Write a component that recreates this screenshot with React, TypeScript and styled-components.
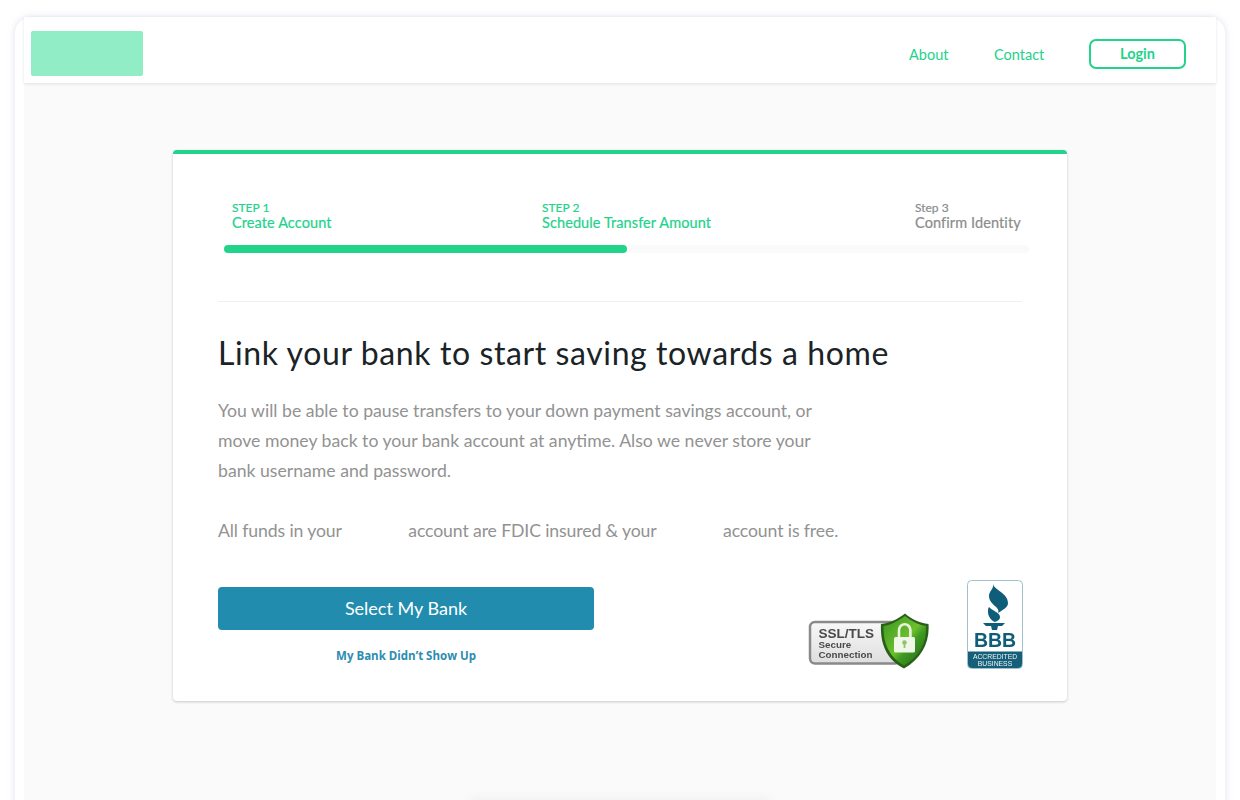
import React from "react";
import styled, { createGlobalStyle } from "styled-components";

const Global = createGlobalStyle`
  html, body { margin: 0; padding: 0; background: #fff; height: 800px; overflow: hidden; }
  * { box-sizing: border-box; }
`;
const heading = `"Lato", "Liberation Sans", sans-serif`;
const bodyFont = `"Lato", "Noto Sans", "Liberation Sans", sans-serif`;
const green = "#22d38a";
const teal = "#218cae";

const Stage = styled.div`
  width: 1240px;
  height: 800px;
  padding: 17px 15px 0;
  overflow: hidden;
`;
const Frame = styled.div`
  width: 1210px;
  height: 830px;
  padding: 0 9px;
  background: #fff;
  border-radius: 16px;
  box-shadow: 0 0 7px rgba(200, 205, 226, 0.6);
`;
const Header = styled.header`
  height: 66px;
  padding: 14px 30px 0 7px;
  display: flex;
  align-items: flex-start;
  background: #fff;
  position: relative;
  box-shadow: 0 1px 3px rgba(0, 0, 0, 0.1);
`;
const Logo = styled.div`
  width: 112px;
  height: 45px;
  background: #90edc5;
  border-radius: 2px;
`;
const Nav = styled.nav`
  margin-left: auto;
  padding-top: 8px;
  display: flex;
  align-items: center;
  font-family: ${heading};
  font-size: 14.5px;
  color: ${green};
`;
const NavLink = styled.a`
  margin-right: 45px;
  width: ${(p: { $w: number }) => p.$w}px;
  white-space: nowrap;
`;
const Login = styled.button`
  width: 97px;
  height: 30px;
  padding: 0 0 2px;
  background: #fff;
  border: 2px solid ${green};
  border-radius: 7px;
  color: ${green};
  font-family: ${heading};
  font-weight: 700;
  font-size: 14.5px;
`;
const Main = styled.main`
  height: 764px;
  padding-top: 67px;
  background: #fafafa;
  display: flex;
  flex-direction: column;
  align-items: center;
`;
const Card = styled.section`
  width: 894px;
  height: 551px;
  flex: none;
  padding: 47px 45px 0;
  background: #fff;
  border-top: 4px solid ${green};
  border-radius: 4px;
  box-shadow: 0 1px 3px rgba(0, 0, 0, 0.2);
`;
const Steps = styled.div`
  display: grid;
  grid-template-columns: 310px 373px auto;
  padding-left: 14px;
  height: 39px;
`;
const Step = styled.div<{ $on?: boolean }>`
  font-family: ${heading};
  color: ${(p) => (p.$on ? green : "#8c8c8c")};
  line-height: 14px;
  font-size: 12px;
  white-space: nowrap;
  -webkit-text-stroke: 0.2px currentColor;
`;
const StepName = styled.div`
  font-size: 14.5px;
  letter-spacing: 0.1px;
  line-height: 16px;
`;
const Track = styled.div`
  margin: 5px -7px 0 6px;
  height: 8px;
  border-radius: 4px;
  background: #fafafa;
`;
const Fill = styled.div`
  width: 50%;
  height: 100%;
  border-radius: 4px;
  background: ${green};
`;
const Divider = styled.hr`
  margin: 48px 0 0;
  border: 0;
  height: 1px;
  background: #f0f0f0;
`;
const Title = styled.h1`
  margin: 29px 0 0;
  font-family: ${heading};
  font-weight: 400;
  font-size: 32px;
  letter-spacing: 0.6px;
  line-height: 44px;
  color: #1a2326;
  white-space: nowrap;
`;
const Para = styled.p`
  margin: 21px 0 0;
  font-family: ${bodyFont};
  font-size: 17.65px;
  line-height: 30px;
  color: #929292;
  white-space: nowrap;
`;
const Para2 = styled(Para)`
  margin-top: 30px;
  letter-spacing: -0.12px;
`;
const Gap = styled.span`
  display: inline-block;
  width: 58px;
`;
const Bottom = styled.div`
  margin-top: 15px;
  display: flex;
  align-items: flex-start;
`;
const Cta = styled.div`
  width: 376px;
  padding-top: 26px;
  display: flex;
  flex-direction: column;
  align-items: center;
`;
const Primary = styled.button`
  width: 100%;
  height: 43px;
  padding: 0 0 2px;
  border: 0;
  border-radius: 4px;
  background: ${teal};
  color: #fff;
  font-family: ${heading};
  font-size: 18px;
`;
const Missing = styled.a`
  margin-top: 18px;
  font-family: "Open Sans", sans-serif;
  font-weight: 700;
  font-size: 11.5px;
  line-height: 16px;
  color: #2c8db0;
`;
const Badges = styled.div`
  margin-left: auto;
  margin-right: -1px;
  display: flex;
  align-items: flex-start;
  gap: 37px;
  padding-top: 19px;
`;
const SslBadge = styled.svg`
  margin-top: 33px;
  filter: blur(0.5px);
`;
const BbbBadge = styled.svg`
  filter: blur(0.35px);
`;
const FaintShade = styled.div`
  margin-top: 97px;
  width: 300px;
  height: 10px;
  flex: none;
  background: #f0f0f0;
  filter: blur(4px);
`;

const Ssl = () => (
  <SslBadge width="122" height="56" viewBox="0 0 122 56">
    <defs>
      <linearGradient id="plate" x1="0" y1="0" x2="0" y2="1">
        <stop offset="0" stopColor="#f8f8f8" />
        <stop offset="1" stopColor="#dedede" />
      </linearGradient>
      <linearGradient id="shield" x1="0" y1="0" x2="1" y2="1">
        <stop offset="0" stopColor="#3c9620" />
        <stop offset="0.5" stopColor="#6cc02c" />
        <stop offset="0.62" stopColor="#3f9a22" />
        <stop offset="1" stopColor="#1f6414" />
      </linearGradient>
    </defs>
    <rect x="2" y="9" width="90" height="41.5" rx="5" fill="url(#plate)" stroke="#8a8a8a" strokeWidth="2.5" />
    <text fontFamily="Liberation Sans, sans-serif" fontWeight="700" fill="#4a4a4a">
      <tspan x="10.5" y="24.5" fontSize="13.5">SSL/TLS</tspan>
      <tspan x="10.5" y="34.5" fontSize="9.8">Secure</tspan>
      <tspan x="10.5" y="44.8" fontSize="9.8">Connection</tspan>
    </text>
    <path d="M97 0.5 C 90 6 82 10 73 11 C 72 30 78 46 96 55.5 C 113 46 122 30 120.5 11 C 112 10 103 6 97 0.5 Z" fill="#2a5f1a" />
    <path d="M97 3 C 90 8 83 12 75.5 13 C 75 30 81 44 96 52.5 C 111 44 119 30 118 13 C 111 12 103 8 97 3 Z" fill="url(#shield)" />
    <path d="M91 25 v-8 a5.7 5.7 0 0 1 11.4 0 v8" fill="none" stroke="#eaf5df" strokeWidth="2.6" />
    <rect x="86" y="24" width="21" height="15.5" rx="1.5" fill="#f0f7e8" />
    <circle cx="96.5" cy="29.5" r="2.3" fill="#8fc46a" />
    <rect x="95.6" y="30.5" width="1.8" height="4.5" fill="#8fc46a" />
  </SslBadge>
);

const Bbb = () => (
  <BbbBadge width="56" height="89" viewBox="0 0 56 89">
    <rect x="0.5" y="0.5" width="55" height="88" rx="4" fill="#fff" stroke="#9fc0cc" />
    <path d="M26 4 C 27 10 41 13 41 23 C 41 28 35 30 31 33 C 34 27 22 25 22 16 C 22 11 27 9 26 4 Z" fill="#0f5d78" />
    <path d="M22 27 C 25 31 33 32 33 37 C 33 40 30 41 28 42 C 25 41 21 37 21 32 C 21 30 21 28 22 27 Z" fill="#0f5d78" />
    <path d="M16 43 H 38 L 35 46 H 31 L 30 50 H 25 L 24 46 H 19 Z" fill="#0f5d78" />
    <text x="28" y="67" textAnchor="middle" fontFamily="Liberation Sans, sans-serif" fontWeight="700" fontSize="19.5" fill="#0f5d78">BBB</text>
    <path d="M1 71.5 H 55 V 84 A 4 4 0 0 1 51 88 H 5 A 4 4 0 0 1 1 84 Z" fill="#165f79" />
    <text fontFamily="Liberation Sans, sans-serif" fontSize="6.8" textAnchor="middle" fill="#eef6f8">
      <tspan x="28" y="79">ACCREDITED</tspan>
      <tspan x="28" y="85.6">BUSINESS</tspan>
    </text>
  </BbbBadge>
);

export default function App() {
  return (
    <Stage>
      <Global />
      <Frame>
        <Header>
          <Logo />
          <Nav>
            <NavLink $w={40}>About</NavLink>
            <NavLink $w={50}>Contact</NavLink>
            <Login>Login</Login>
          </Nav>
        </Header>
        <Main>
          <Card>
            <Steps>
              <Step $on>
                STEP 1<StepName>Create Account</StepName>
              </Step>
              <Step $on>
                STEP 2<StepName>Schedule Transfer Amount</StepName>
              </Step>
              <Step>
                Step 3<StepName>Confirm Identity</StepName>
              </Step>
            </Steps>
            <Track>
              <Fill />
            </Track>
            <Divider />
            <Title>Link your bank to start saving towards a home</Title>
            <Para>
              You will be able to pause transfers to your down payment savings account, or
              <br />
              move money back to your bank account at anytime. Also we never store your
              <br />
              bank username and password.
            </Para>
            <Para2>
              All funds in your <Gap /> account are FDIC insured &amp; your <Gap /> account is free.
            </Para2>
            <Bottom>
              <Cta>
                <Primary>Select My Bank</Primary>
                <Missing>My Bank Didn’t Show Up</Missing>
              </Cta>
              <Badges>
                <Ssl />
                <Bbb />
              </Badges>
            </Bottom>
          </Card>
          <FaintShade />
        </Main>
      </Frame>
    </Stage>
  );
}
